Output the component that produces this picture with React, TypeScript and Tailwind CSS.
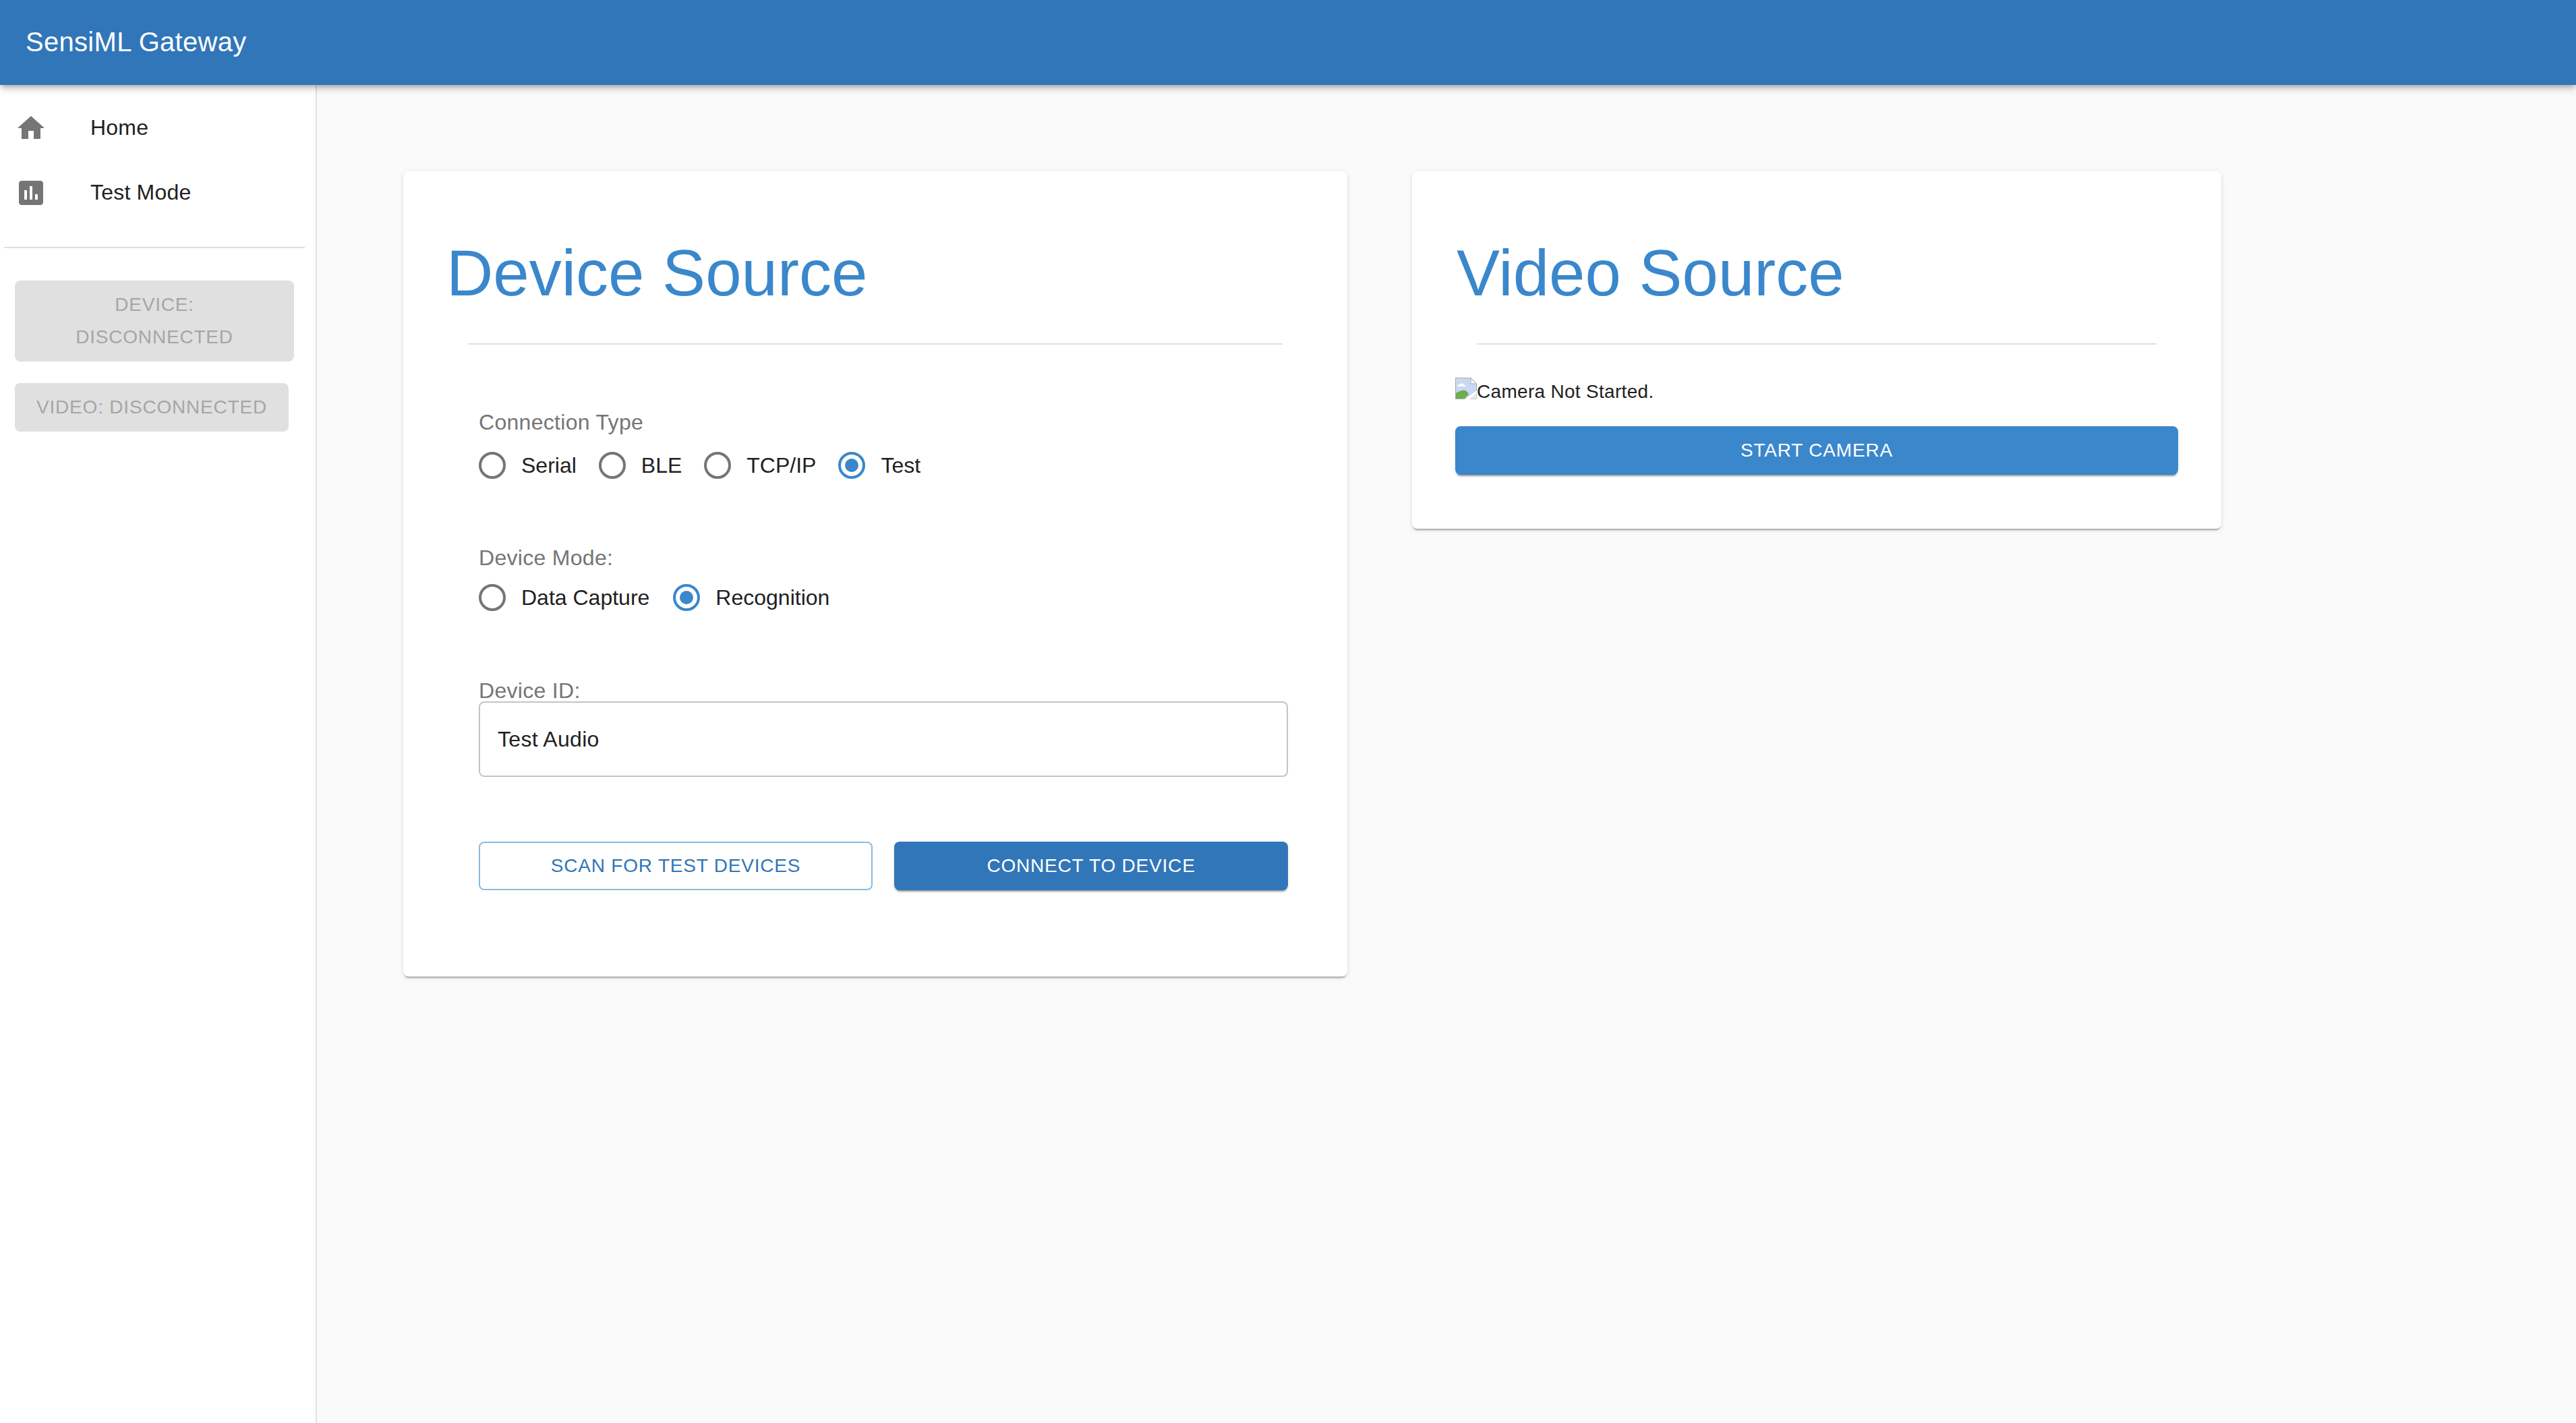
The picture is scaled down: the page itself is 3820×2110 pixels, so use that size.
const FONT = "font-['Liberation_Sans',Arial,sans-serif]";

function Radio({ label, checked, className }: { label: string; checked?: boolean; className?: string }) {
  return (
    <label className={`flex items-center ${className ?? ""}`}>
      <span
        className={`flex h-10 w-10 items-center justify-center rounded-full border-4 ${
          checked ? "border-[#3a87cc]" : "border-[#757575]"
        }`}
      >
        {checked && <span className="h-5 w-5 rounded-full bg-[#3a87cc]" />}
      </span>
      <span className="ml-[23px] text-[32px] leading-[48px] text-[#212121]">{label}</span>
    </label>
  );
}

function NavItem({ label, d }: { label: string; d: string }) {
  return (
    <div className="flex h-24 items-center pl-[22px]">
      <svg viewBox="0 0 24 24" className="h-12 w-12 fill-[#757575]">
        <path d={d} />
      </svg>
      <span className="mb-[2px] ml-[64px] text-[32px] leading-[48px] tracking-[0.2px] text-[#212121]">{label}</span>
    </div>
  );
}

function BrokenImage() {
  return (
    <svg viewBox="0 0 32 32" className="h-8 w-8 shrink-0">
      <path d="M0.5 0.5H23L31.5 9V31.5H0.5Z" fill="#c9d9f2" stroke="#a8a8a8" />
      <path d="M23 0.5V9H31.5Z" fill="#fff" stroke="#a8a8a8" />
      <path d="M3 13c0-2 2-3 4-3 1-2 4-2 5 0 2 0 3 1 3 3Z" fill="#fff" />
      <path d="M1 31V23c4-3 10-5 14-4 2 1 4 3 5 6l-6 6Z" fill="#6fae4f" />
      <path d="M14 32L32 19V23L22 32Z" fill="#fff" />
      <path d="M23 31.5L31.5 24V31.5Z" fill="#e4e9ef" />
    </svg>
  );
}

export default function App() {
  return (
    <div className={`flex h-screen w-full flex-col bg-[#fafafa] ${FONT}`}>
      <header className="relative z-10 flex h-[126px] shrink-0 items-center bg-[#3176b8] pb-[3px] pl-[38px] shadow-[0_4px_8px_-2px_rgba(0,0,0,0.3),0_8px_10px_0_rgba(0,0,0,0.1)]">
        <h1 className="text-[40px] font-normal leading-[56px] tracking-[0.3px] text-white">SensiML Gateway</h1>
      </header>
      <div className="flex min-h-0 flex-1">
        <aside className="w-[470px] shrink-0 border-r-2 border-[#e0e0e0] bg-white">
          <nav className="py-4">
            <NavItem label="Home" d="M10 20v-6h4v6h5v-8h3L12 3 2 12h3v8z" />
            <NavItem
              label="Test Mode"
              d="M19 3H5c-1.1 0-2 .9-2 2v14c0 1.1.9 2 2 2h14c1.1 0 2-.9 2-2V5c0-1.1-.9-2-2-2zM9 17H7v-7h2v7zm4 0h-2V7h2v10zm4 0h-2v-4h2v4z"
            />
          </nav>
          <div className="ml-[6px] mt-4 h-0.5 w-[446px] bg-[#e0e0e0]" />
          <div className="flex flex-col items-start gap-8 pl-[22px] pt-12">
            <div className="w-[414px] rounded-lg bg-[#e0e0e0] px-8 py-3 text-center text-[28px] leading-[48px] tracking-[0.8px] text-[#a6a6a6]">
              DEVICE: DISCONNECTED
            </div>
            <div className="w-[406px] whitespace-nowrap rounded-lg bg-[#e0e0e0] py-3 text-center text-[28px] leading-[48px] tracking-[0.8px] text-[#a6a6a6]">
              VIDEO: DISCONNECTED
            </div>
          </div>
        </aside>
        <main className="flex flex-1 items-start gap-24 pl-32 pt-32">
          <section className="h-[1194px] w-[1400px] rounded-lg bg-white shadow-[0_4px_2px_-2px_rgba(0,0,0,0.25),0_2px_4px_0_rgba(0,0,0,0.1),0_2px_10px_0_rgba(0,0,0,0.06)]">
            <h2 className="ml-[64px] pt-[95px] text-[96px] font-normal leading-[112px] text-[#3a87cc]">Device Source</h2>
            <div className="ml-[96px] mt-[48px] h-0.5 w-[1208px] bg-[#e0e0e0]" />
            <div className="ml-28 w-[1200px]">
              <div className="mt-[91px] text-[32px] leading-[48px] tracking-[0.3px] text-[#757575]">Connection Type</div>
              <div className="mt-[14px] flex h-[52px] items-center">
                <Radio label="Serial" className="mr-[33px]" />
                <Radio label="BLE" className="mr-[33px]" />
                <Radio label="TCP/IP" className="mr-[33px]" />
                <Radio label="Test" checked />
              </div>
              <div className="mt-[87px] text-[32px] leading-[48px] tracking-[0.3px] text-[#757575]">Device Mode:</div>
              <div className="mt-[9px] flex h-[52px] items-center">
                <Radio label="Data Capture" className="mr-[35px]" />
                <Radio label="Recognition" checked />
              </div>
              <div className="-mb-2 mt-[88px] text-[32px] leading-[48px] tracking-[0.3px] text-[#757575]">Device ID:</div>
              <div className="relative flex h-28 items-center rounded-lg border-2 border-[#c4c4c4] pl-[26px] text-[32px] tracking-[0.3px] text-[#212121]">
                Test Audio
              </div>
              <div className="mt-24 flex gap-8">
                <button className="h-[72px] w-[584px] rounded-lg border-2 border-[#8cbbdc] bg-white text-[28px] tracking-[0.8px] text-[#3176b8]">
                  SCAN FOR TEST DEVICES
                </button>
                <button className="h-[72px] w-[584px] rounded-lg bg-[#3176b8] text-[28px] tracking-[0.8px] text-white shadow-[0_4px_2px_-2px_rgba(0,0,0,0.3),0_2px_4px_0_rgba(0,0,0,0.14)]">
                  CONNECT TO DEVICE
                </button>
              </div>
            </div>
          </section>
          <section className="h-[530px] w-[1200px] rounded-lg bg-white shadow-[0_4px_2px_-2px_rgba(0,0,0,0.25),0_2px_4px_0_rgba(0,0,0,0.1),0_2px_10px_0_rgba(0,0,0,0.06)]">
            <h2 className="ml-[66px] pt-[95px] text-[96px] font-normal leading-[112px] text-[#3a87cc]">Video Source</h2>
            <div className="ml-24 mt-[48px] h-0.5 w-[1008px] bg-[#e0e0e0]" />
            <div className="ml-16 mt-[49px] flex h-8 items-start text-[28px] leading-8 tracking-[0.3px] text-[#212121]">
              <BrokenImage />
              <span className="mt-[5px]">Camera Not Started.</span>
            </div>
            <button className="ml-16 mt-10 h-[72px] w-[1072px] rounded-lg bg-[#3a87cc] text-[28px] tracking-[0.8px] text-white shadow-[0_4px_2px_-2px_rgba(0,0,0,0.3),0_2px_4px_0_rgba(0,0,0,0.14)]">
              START CAMERA
            </button>
          </section>
        </main>
      </div>
    </div>
  );
}
